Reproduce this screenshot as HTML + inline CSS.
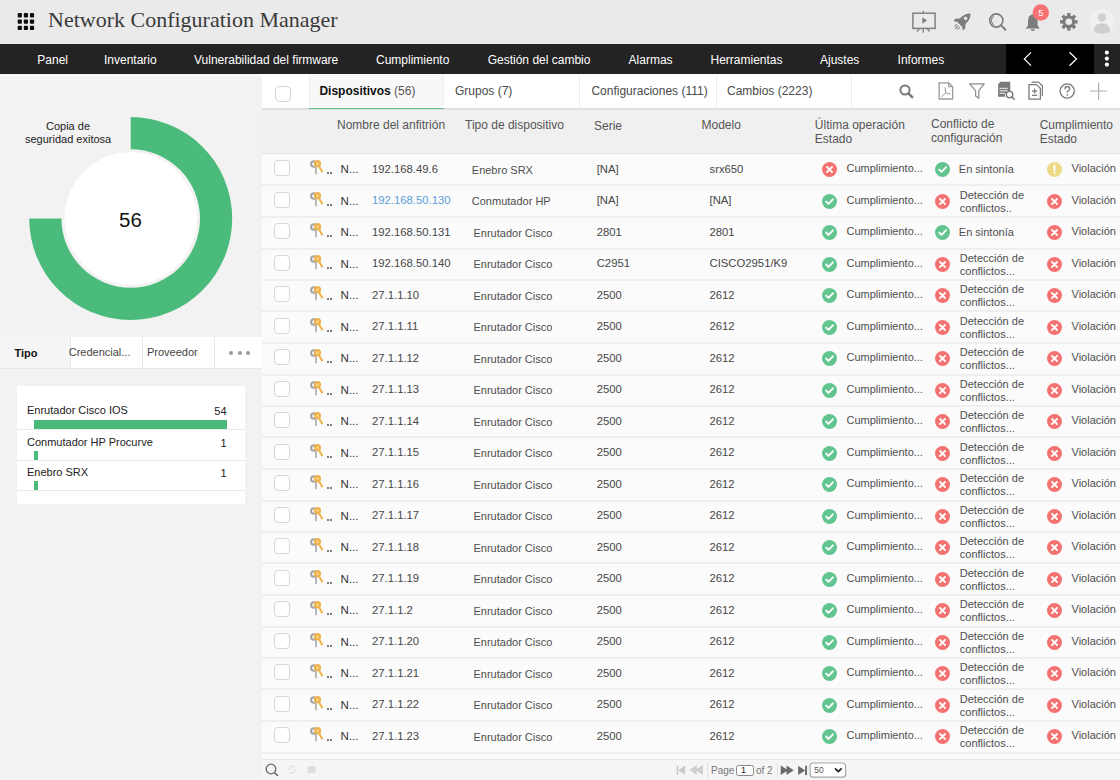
<!DOCTYPE html>
<html><head><meta charset="utf-8">
<style>
*{margin:0;padding:0;box-sizing:border-box}
html,body{width:1120px;height:780px;overflow:hidden;background:#f3f3f3;font-family:"Liberation Sans",sans-serif;color:#333}
.abs{position:absolute}
.t{position:absolute;white-space:nowrap;line-height:1}
#hdr{position:absolute;left:0;top:0;width:1120px;height:44px;background:#eaeaea}
#nav{position:absolute;left:0;top:44px;width:1120px;height:30px;background:#232323}
#nav .t{color:#fff;font-size:12px;top:10px}
#left{position:absolute;left:0;top:74px;width:262px;height:706px;background:#f2f2f2}
#main{position:absolute;left:262px;top:74px;width:858px;height:706px;background:#fbfbfb}
.cb{position:absolute;width:16px;height:16px;border:1.5px solid #d6d6d6;border-radius:4px;background:#fff}
.row{position:absolute;left:262px;width:858px;height:32px;border-top:1.5px solid #ebebeb}
.c{position:absolute;white-space:nowrap;font-size:11px;color:#4e4e4e;line-height:1}
.lato{font-size:11.3px;color:#474747}
</style></head><body>

<div id="hdr">
<svg class="abs" style="left:0;top:0" width="44" height="44" viewBox="0 0 44 44"><rect x="17.70" y="13.10" width="4.2" height="4.3" rx="0.9" fill="#0e0e0e"/><rect x="23.80" y="13.10" width="4.2" height="4.3" rx="0.9" fill="#0e0e0e"/><rect x="29.90" y="13.10" width="4.2" height="4.3" rx="0.9" fill="#0e0e0e"/><rect x="17.70" y="19.45" width="4.2" height="4.3" rx="0.9" fill="#0e0e0e"/><rect x="23.80" y="19.45" width="4.2" height="4.3" rx="0.9" fill="#0e0e0e"/><rect x="29.90" y="19.45" width="4.2" height="4.3" rx="0.9" fill="#0e0e0e"/><rect x="17.70" y="25.80" width="4.2" height="4.3" rx="0.9" fill="#0e0e0e"/><rect x="23.80" y="25.80" width="4.2" height="4.3" rx="0.9" fill="#0e0e0e"/><rect x="29.90" y="25.80" width="4.2" height="4.3" rx="0.9" fill="#0e0e0e"/></svg>
<div class="t" style="left:48px;top:9px;font-family:'Liberation Serif',serif;font-size:22px;color:#3a3a3a">Network Configuration Manager</div>
<svg class="abs" style="left:905px;top:0px" width="215" height="44" viewBox="905 0 215 44">
<rect x="912.9" y="13.2" width="22.2" height="15.2" fill="none" stroke="#808080" stroke-width="1.5"/>
<path d="M923.3 10.8 L923.3 13 M923.3 28.6 L923.3 32.8 M919.2 29 L917 31.5 M927.4 29 L929.6 31.5" stroke="#808080" stroke-width="1.3"/>
<path d="M922.3 17.2 L927 20.5 L922.3 23.8 Z" fill="#808080"/>
<g transform="translate(962.6,21.4) rotate(45)">
<path d="M0 -11 C4.2 -7.5 4.6 -1.5 3.4 4.2 L-3.4 4.2 C-4.6 -1.5 -4.2 -7.5 0 -11 Z" fill="#7c7c7c"/>
<path d="M-3.2 -1 L-6.8 3.2 L-6.8 6.2 L-3.4 4.2 Z M3.2 -1 L6.8 3.2 L6.8 6.2 L3.4 4.2 Z" fill="#7c7c7c"/>
<circle cx="0" cy="-4.3" r="1.7" fill="#eaeaea"/>
<path d="M-2 6 L-2 9.5 M0 6 L0 10.5 M2 6 L2 9.5" stroke="#8a8a8a" stroke-width="1.1"/>
</g>
<circle cx="996.3" cy="20.5" r="6.6" fill="none" stroke="#7c7c7c" stroke-width="1.6"/>
<path d="M994 16.2 A4.8 4.8 0 0 0 994 24.8" fill="none" stroke="#7c7c7c" stroke-width="1"/>
<path d="M1001.2 25.4 L1005.4 29.8" stroke="#7c7c7c" stroke-width="2" stroke-linecap="round"/>
<path d="M1032.8 14.2 Q1028 15 1028 21 L1028 25.5 L1025.7 28.6 L1039.9 28.6 L1037.6 25.5 L1037.6 21 Q1037.6 15 1032.8 14.2 Z" fill="#7c7c7c"/>
<path d="M1030.6 29.2 L1035 29.2 Q1035 31 1032.8 31 Q1030.6 31 1030.6 29.2 Z" fill="#7c7c7c"/>
<circle cx="1040.8" cy="12.5" r="8.2" fill="#f77272"/>
<text x="1040.8" y="15.7" font-size="9" fill="#fff" text-anchor="middle" font-family="Liberation Sans">5</text>
<g transform="translate(1068.8,21.8)">
<g fill="#7c7c7c"><rect x="-1.7" y="-8.8" width="3.4" height="17.6"/><rect x="-1.7" y="-8.8" width="3.4" height="17.6" transform="rotate(45)"/><rect x="-1.7" y="-8.8" width="3.4" height="17.6" transform="rotate(90)"/><rect x="-1.7" y="-8.8" width="3.4" height="17.6" transform="rotate(135)"/></g>
<circle r="6.4" fill="#7c7c7c"/>
<circle r="3.3" fill="#eaeaea"/>
</g>
<circle cx="1102.2" cy="21.6" r="12.3" fill="#f0f0f0"/>
<circle cx="1101.9" cy="17.4" r="4.1" fill="#cfcfcf"/>
<path d="M1093.8 31.2 Q1093.8 23.2 1102 23.2 Q1110.2 23.2 1110.2 31.2 Q1106.5 33.9 1102 33.9 Q1097.5 33.9 1093.8 31.2 Z" fill="#cfcfcf"/>
</svg>
</div>
<div id="nav">
<div class="t" style="left:37.3px">Panel</div>
<div class="t" style="left:104.0px">Inventario</div>
<div class="t" style="left:194.0px">Vulnerabilidad del firmware</div>
<div class="t" style="left:376.0px">Cumplimiento</div>
<div class="t" style="left:487.7px">Gestión del cambio</div>
<div class="t" style="left:628.6px">Alarmas</div>
<div class="t" style="left:710.5px">Herramientas</div>
<div class="t" style="left:820.0px">Ajustes</div>
<div class="t" style="left:897.6px">Informes</div>
<div class="abs" style="left:1006px;top:0;width:88px;height:30px;background:#000"></div>
<svg class="abs" style="left:1006px;top:0" width="114" height="30" viewBox="1006 44 114 30">
<path d="M1031 52.3 L1024.3 59 L1031 65.7" fill="none" stroke="#fff" stroke-width="1.2"/>
<path d="M1069.5 52.3 L1076.5 59 L1069.5 65.7" fill="none" stroke="#fff" stroke-width="1.2"/>
<circle cx="1106.9" cy="52.6" r="2.1" fill="#fff"/><circle cx="1106.9" cy="58.6" r="2.1" fill="#fff"/><circle cx="1106.9" cy="64.6" r="2.1" fill="#fff"/>
</svg>
</div>
<div id="left">
</div>
<div class="abs" style="left:0;top:74.5px;width:262px;height:1.5px;background:#fdfdfd"></div>
<svg class="abs" style="left:0;top:74px" width="262" height="262" viewBox="0 74 262 262">
<path d="M130.7 117 A101.5 101.5 0 1 1 29.2 218.5 L61.4 218.5 A69.3 69.3 0 1 0 130.7 149.2 Z" fill="#4bbb7c"/>
<circle cx="130.7" cy="218.5" r="66.3" fill="#fff"/>
</svg>
<div class="t" style="left:46px;top:121px;font-size:11px;color:#222">Copia de</div>
<div class="t" style="left:25px;top:134px;font-size:11px;color:#222">seguridad exitosa</div>
<div class="t" style="left:119px;top:210px;font-size:20.5px;color:#111">56</div>
<div class="abs" style="left:0;top:337px;width:262px;height:32px;background:#fff;border-bottom:1px solid #e6e6e6"></div>
<div class="abs" style="left:0;top:337px;width:70px;height:31px;background:#f5f5f5"></div>
<div class="abs" style="left:70px;top:337px;width:1px;height:31px;background:#e8e8e8"></div>
<div class="abs" style="left:142px;top:337px;width:1px;height:31px;background:#e8e8e8"></div>
<div class="abs" style="left:214px;top:337px;width:1px;height:31px;background:#e8e8e8"></div>
<div class="t" style="left:14.5px;top:348px;font-size:11px;font-weight:bold;color:#111">Tipo</div>
<div class="t" style="left:68.7px;top:347px;font-size:11px;color:#444">Credencial...</div>
<div class="t" style="left:147px;top:347px;font-size:11px;color:#444">Proveedor</div>
<div class="abs" style="left:229.0px;top:351px;width:4px;height:4px;border-radius:50%;background:#9a9a9a"></div>
<div class="abs" style="left:237.5px;top:351px;width:4px;height:4px;border-radius:50%;background:#9a9a9a"></div>
<div class="abs" style="left:246.0px;top:351px;width:4px;height:4px;border-radius:50%;background:#9a9a9a"></div>
<div class="abs" style="left:17px;top:386px;width:228px;height:118px;background:#fff"></div>
<div class="t" style="left:27px;top:405.0px;font-size:11px;color:#222">Enrutador Cisco IOS</div>
<div class="t" style="right:893.4px;top:406.0px;font-size:11px;color:#222">54</div>
<div class="abs" style="left:34.2px;top:420.0px;width:192.4px;height:9px;background:#4aba7b"></div>
<div class="t" style="left:27px;top:436.6px;font-size:11px;color:#222">Conmutador HP Procurve</div>
<div class="t" style="right:893.4px;top:437.6px;font-size:11px;color:#222">1</div>
<div class="abs" style="left:34.2px;top:451.0px;width:4.0px;height:9px;background:#4aba7b"></div>
<div class="t" style="left:27px;top:467.0px;font-size:11px;color:#222">Enebro SRX</div>
<div class="t" style="right:893.4px;top:468.0px;font-size:11px;color:#222">1</div>
<div class="abs" style="left:34.2px;top:481.4px;width:4.0px;height:9px;background:#4aba7b"></div>
<div class="abs" style="left:17px;top:429.3px;width:228px;height:1px;background:#e9e9e9"></div>
<div class="abs" style="left:17px;top:460.0px;width:228px;height:1px;background:#e9e9e9"></div>
<div class="abs" style="left:17px;top:490.3px;width:228px;height:1px;background:#e9e9e9"></div>
<div id="main"></div>
<div class="abs" style="left:262px;top:74px;width:858px;height:36px;background:#fff;border-bottom:2px solid #e0e0e0"></div>
<div class="abs" style="left:309px;top:75px;width:135px;height:31px;background:#f8f8f8;border-left:1px solid #ececec;border-right:1px solid #ececec"></div>
<div class="abs" style="left:309px;top:107.6px;width:135px;height:1.6px;background:#5cc18b"></div>
<div class="abs" style="left:579.4px;top:75px;width:1px;height:33px;background:#ececec"></div>
<div class="abs" style="left:715.7px;top:75px;width:1px;height:33px;background:#ececec"></div>
<div class="abs" style="left:851.0px;top:75px;width:1px;height:33px;background:#ececec"></div>
<div class="cb" style="left:275px;top:86px"></div>
<div class="t" style="left:319.4px;top:85px;font-size:12px;color:#111"><b>Dispositivos</b> <span style="color:#555">(56)</span></div>
<div class="t" style="left:455px;top:85px;font-size:12px;color:#4a4a4a">Grupos (7)</div>
<div class="t" style="left:591.4px;top:85px;font-size:12px;color:#4a4a4a">Configuraciones (111)</div>
<div class="t" style="left:727px;top:85px;font-size:12px;color:#4a4a4a">Cambios (2223)</div>
<svg class="abs" style="left:890px;top:75px" width="230" height="33" viewBox="890 75 230 33">
<circle cx="905" cy="90" r="4.6" fill="none" stroke="#7a7a7a" stroke-width="2"/>
<path d="M908.4 93.4 L912.2 97.2" stroke="#7a7a7a" stroke-width="2.6" stroke-linecap="round"/>
<path d="M939.1 82.8 L948.6 82.8 L952.6 86.8 L952.6 99 L939.1 99 Z" fill="none" stroke="#999" stroke-width="1.3" stroke-linejoin="round"/>
<path d="M948.6 82.8 L948.6 86.8 L952.6 86.8" fill="none" stroke="#999" stroke-width="1.1"/>
<path d="M945 87.2 L945.7 92.9 L941.2 96.9 M945.7 92.9 L950.5 94" fill="none" stroke="#999" stroke-width="1"/>
<path d="M969.5 83.9 L984.2 83.9 L978.8 90.6 L978.8 98.3 L975.6 96 L975.6 90.6 Z" fill="none" stroke="#8a8a8a" stroke-width="1.2" stroke-linejoin="round"/>
<path d="M1000.5 81.8 L1010.3 81.8 L1010.3 91 A4.5 4.5 0 0 0 1005.3 96.8 L998.1 96.8 L998.1 84.3 Z" fill="#7a7a7a"/>
<path d="M999.5 88.3 L1007.8 88.3 M999.5 90.8 L1007.8 90.8 M999.5 93.3 L1004.8 93.3" stroke="#f4f4f4" stroke-width="1"/>
<circle cx="1009.6" cy="94.6" r="3.2" fill="none" stroke="#7a7a7a" stroke-width="1.4"/>
<path d="M1011.9 96.9 L1014.2 99.2" stroke="#7a7a7a" stroke-width="1.6" stroke-linecap="round"/>
<path d="M1031.5 82.2 L1038.6 82.2 L1042.4 86 L1042.4 95.8" fill="none" stroke="#7a7a7a" stroke-width="1.2"/>
<path d="M1029 84.6 L1036.6 84.6 L1040.4 88.4 L1040.4 99.2 L1029 99.2 Z" fill="#fff" stroke="#7a7a7a" stroke-width="1.3" stroke-linejoin="round"/>
<path d="M1034.6 88.6 L1034.6 93.6 M1032 91.1 L1037.2 91.1 M1032 95.3 L1037.2 95.3" stroke="#7a7a7a" stroke-width="1.2"/>
<circle cx="1067.2" cy="91" r="7.1" fill="none" stroke="#7a7a7a" stroke-width="1.3"/>
<path d="M1064.9 89.2 Q1064.9 86.5 1067.3 86.5 Q1069.7 86.5 1069.7 88.8 Q1069.7 90.2 1068.2 90.9 Q1067.3 91.4 1067.3 92.7" fill="none" stroke="#7a7a7a" stroke-width="1.3"/>
<circle cx="1067.3" cy="94.8" r="0.85" fill="#7a7a7a"/>
<path d="M1098.6 82.4 L1098.6 99.7 M1090 91 L1107.2 91" stroke="#b0b0b0" stroke-width="1.2"/>
</svg>
<div class="abs" style="left:262px;top:110px;width:858px;height:44px;background:#f0f0f0;border-bottom:1px solid #e6e6e6"></div>
<div class="t" style="left:337.0px;top:118.0px;font-size:12px;color:#555;line-height:14px">Nombre del anfitrión</div>
<div class="t" style="left:465.0px;top:118.0px;font-size:12px;color:#555;line-height:14px">Tipo de dispositivo</div>
<div class="t" style="left:594.0px;top:118.5px;font-size:12px;color:#555;line-height:14px">Serie</div>
<div class="t" style="left:701.5px;top:118.0px;font-size:12px;color:#555;line-height:14px">Modelo</div>
<div class="t" style="left:814.8px;top:117.5px;font-size:12px;color:#555;line-height:14px">Última operación<br>Estado</div>
<div class="t" style="left:931.0px;top:116.5px;font-size:12px;color:#555;line-height:14px">Conflicto de<br>configuración</div>
<div class="t" style="left:1039.7px;top:117.5px;font-size:12px;color:#555;line-height:14px">Cumplimiento<br>Estado</div>

<div class="cb" style="left:274px;top:160.0px"></div>
<div class="abs" style="left:306px;top:158.0px;width:20px;height:20px"><svg width="20" height="20" viewBox="306 158 20 20"><circle cx="313.9" cy="164" r="2.8" fill="none" stroke="#a4a4a4" stroke-width="2.1"/><path d="M316 166.5 L316 174.3" stroke="#adadad" stroke-width="1.7"/><circle cx="317.5" cy="163.7" r="2.5" fill="#f6d685" stroke="#efb24c" stroke-width="2.2"/><path d="M318.9 166.2 L322.6 172.3" stroke="#efb24c" stroke-width="2.1"/></svg></div>
<div class="abs" style="left:326.8px;top:172.3px;width:1.9px;height:1.9px;background:#555;border-radius:50%"></div>
<div class="abs" style="left:329.8px;top:172.3px;width:1.9px;height:1.9px;background:#555;border-radius:50%"></div>
<div class="c" style="left:340.6px;top:164.0px;color:#333;font-size:11.5px">N...</div>
<div class="c lato" style="left:372px;top:163.8px;">192.168.49.6</div>
<div class="c" style="left:471.8px;top:164.7px">Enebro SRX</div>
<div class="c lato" style="left:596.7px;top:163.8px">[NA]</div>
<div class="c lato" style="left:709.5px;top:163.8px">srx650</div>
<div class="abs" style="left:822.4px;top:162.2px;width:15px;height:15px"><svg width="15" height="15" viewBox="0 0 15 15"><circle cx="7.5" cy="7.5" r="7.5" fill="#f57272"/><path d="M5 5 L10 10 M10 5 L5 10" stroke="#fff" stroke-width="1.8" fill="none" stroke-linecap="round"/></svg></div>
<div class="c" style="left:846.5px;top:163.0px">Cumplimiento...</div>
<div class="abs" style="left:934.8px;top:162.0px;width:15px;height:15px"><svg width="15" height="15" viewBox="0 0 15 15"><circle cx="7.5" cy="7.5" r="7.5" fill="#62c48f"/><path d="M4.2 7.6 L6.5 9.8 L10.9 5.3" stroke="#fff" stroke-width="1.9" fill="none" stroke-linecap="round" stroke-linejoin="round"/></svg></div>
<div class="c" style="left:958.8px;top:164.0px">En sintonía</div>
<div class="abs" style="left:1046.5px;top:162.2px;width:15px;height:15px"><svg width="15" height="15" viewBox="0 0 15 15"><circle cx="7.5" cy="7.5" r="7.5" fill="#ecdb84"/><path d="M7.5 3.8 L7.5 8.6" stroke="#fff" stroke-width="1.9" stroke-linecap="round"/><circle cx="7.5" cy="11" r="1" fill="#fff"/></svg></div>
<div class="c" style="left:1071.5px;top:163.0px">Violación</div>
<div class="abs" style="left:262px;top:184px;width:858px;height:2px;background:#efefef"></div>
<div class="cb" style="left:274px;top:191.5px"></div>
<div class="abs" style="left:306px;top:189.5px;width:20px;height:20px"><svg width="20" height="20" viewBox="306 158 20 20"><circle cx="313.9" cy="164" r="2.8" fill="none" stroke="#a4a4a4" stroke-width="2.1"/><path d="M316 166.5 L316 174.3" stroke="#adadad" stroke-width="1.7"/><circle cx="317.5" cy="163.7" r="2.5" fill="#f6d685" stroke="#efb24c" stroke-width="2.2"/><path d="M318.9 166.2 L322.6 172.3" stroke="#efb24c" stroke-width="2.1"/></svg></div>
<div class="abs" style="left:326.8px;top:203.8px;width:1.9px;height:1.9px;background:#555;border-radius:50%"></div>
<div class="abs" style="left:329.8px;top:203.8px;width:1.9px;height:1.9px;background:#555;border-radius:50%"></div>
<div class="c" style="left:340.6px;top:195.5px;color:#333;font-size:11.5px">N...</div>
<div class="c lato" style="left:372px;top:195.3px;color:#5aa0da">192.168.50.130</div>
<div class="c" style="left:471.8px;top:196.2px">Conmutador HP</div>
<div class="c lato" style="left:596.7px;top:195.3px">[NA]</div>
<div class="c lato" style="left:709.5px;top:195.3px">[NA]</div>
<div class="abs" style="left:822.4px;top:193.7px;width:15px;height:15px"><svg width="15" height="15" viewBox="0 0 15 15"><circle cx="7.5" cy="7.5" r="7.5" fill="#62c48f"/><path d="M4.2 7.6 L6.5 9.8 L10.9 5.3" stroke="#fff" stroke-width="1.9" fill="none" stroke-linecap="round" stroke-linejoin="round"/></svg></div>
<div class="c" style="left:846.5px;top:194.5px">Cumplimiento...</div>
<div class="abs" style="left:934.8px;top:193.5px;width:15px;height:15px"><svg width="15" height="15" viewBox="0 0 15 15"><circle cx="7.5" cy="7.5" r="7.5" fill="#f57272"/><path d="M5 5 L10 10 M10 5 L5 10" stroke="#fff" stroke-width="1.8" fill="none" stroke-linecap="round"/></svg></div>
<div class="c" style="left:959.8px;top:188.8px;line-height:12.75px">Detección de<br>conflictos..</div>
<div class="abs" style="left:1046.5px;top:193.7px;width:15px;height:15px"><svg width="15" height="15" viewBox="0 0 15 15"><circle cx="7.5" cy="7.5" r="7.5" fill="#f57272"/><path d="M5 5 L10 10 M10 5 L5 10" stroke="#fff" stroke-width="1.8" fill="none" stroke-linecap="round"/></svg></div>
<div class="c" style="left:1071.5px;top:194.5px">Violación</div>
<div class="abs" style="left:262px;top:216px;width:858px;height:2px;background:#efefef"></div>
<div class="cb" style="left:274px;top:223.0px"></div>
<div class="abs" style="left:306px;top:221.0px;width:20px;height:20px"><svg width="20" height="20" viewBox="306 158 20 20"><circle cx="313.9" cy="164" r="2.8" fill="none" stroke="#a4a4a4" stroke-width="2.1"/><path d="M316 166.5 L316 174.3" stroke="#adadad" stroke-width="1.7"/><circle cx="317.5" cy="163.7" r="2.5" fill="#f6d685" stroke="#efb24c" stroke-width="2.2"/><path d="M318.9 166.2 L322.6 172.3" stroke="#efb24c" stroke-width="2.1"/></svg></div>
<div class="abs" style="left:326.8px;top:235.3px;width:1.9px;height:1.9px;background:#555;border-radius:50%"></div>
<div class="abs" style="left:329.8px;top:235.3px;width:1.9px;height:1.9px;background:#555;border-radius:50%"></div>
<div class="c" style="left:340.6px;top:227.0px;color:#333;font-size:11.5px">N...</div>
<div class="c lato" style="left:372px;top:226.8px;">192.168.50.131</div>
<div class="c" style="left:473.5px;top:227.7px">Enrutador Cisco</div>
<div class="c lato" style="left:596.7px;top:226.8px">2801</div>
<div class="c lato" style="left:709.5px;top:226.8px">2801</div>
<div class="abs" style="left:822.4px;top:225.2px;width:15px;height:15px"><svg width="15" height="15" viewBox="0 0 15 15"><circle cx="7.5" cy="7.5" r="7.5" fill="#62c48f"/><path d="M4.2 7.6 L6.5 9.8 L10.9 5.3" stroke="#fff" stroke-width="1.9" fill="none" stroke-linecap="round" stroke-linejoin="round"/></svg></div>
<div class="c" style="left:846.5px;top:226.0px">Cumplimiento...</div>
<div class="abs" style="left:934.8px;top:225.0px;width:15px;height:15px"><svg width="15" height="15" viewBox="0 0 15 15"><circle cx="7.5" cy="7.5" r="7.5" fill="#62c48f"/><path d="M4.2 7.6 L6.5 9.8 L10.9 5.3" stroke="#fff" stroke-width="1.9" fill="none" stroke-linecap="round" stroke-linejoin="round"/></svg></div>
<div class="c" style="left:958.8px;top:227.0px">En sintonía</div>
<div class="abs" style="left:1046.5px;top:225.2px;width:15px;height:15px"><svg width="15" height="15" viewBox="0 0 15 15"><circle cx="7.5" cy="7.5" r="7.5" fill="#f57272"/><path d="M5 5 L10 10 M10 5 L5 10" stroke="#fff" stroke-width="1.8" fill="none" stroke-linecap="round"/></svg></div>
<div class="c" style="left:1071.5px;top:226.0px">Violación</div>
<div class="abs" style="left:262px;top:248px;width:858px;height:2px;background:#efefef"></div>
<div class="cb" style="left:274px;top:254.5px"></div>
<div class="abs" style="left:306px;top:252.5px;width:20px;height:20px"><svg width="20" height="20" viewBox="306 158 20 20"><circle cx="313.9" cy="164" r="2.8" fill="none" stroke="#a4a4a4" stroke-width="2.1"/><path d="M316 166.5 L316 174.3" stroke="#adadad" stroke-width="1.7"/><circle cx="317.5" cy="163.7" r="2.5" fill="#f6d685" stroke="#efb24c" stroke-width="2.2"/><path d="M318.9 166.2 L322.6 172.3" stroke="#efb24c" stroke-width="2.1"/></svg></div>
<div class="abs" style="left:326.8px;top:266.8px;width:1.9px;height:1.9px;background:#555;border-radius:50%"></div>
<div class="abs" style="left:329.8px;top:266.8px;width:1.9px;height:1.9px;background:#555;border-radius:50%"></div>
<div class="c" style="left:340.6px;top:258.5px;color:#333;font-size:11.5px">N...</div>
<div class="c lato" style="left:372px;top:258.3px;">192.168.50.140</div>
<div class="c" style="left:473.5px;top:259.2px">Enrutador Cisco</div>
<div class="c lato" style="left:596.7px;top:258.3px">C2951</div>
<div class="c lato" style="left:709.5px;top:258.3px">CISCO2951/K9</div>
<div class="abs" style="left:822.4px;top:256.7px;width:15px;height:15px"><svg width="15" height="15" viewBox="0 0 15 15"><circle cx="7.5" cy="7.5" r="7.5" fill="#62c48f"/><path d="M4.2 7.6 L6.5 9.8 L10.9 5.3" stroke="#fff" stroke-width="1.9" fill="none" stroke-linecap="round" stroke-linejoin="round"/></svg></div>
<div class="c" style="left:846.5px;top:257.5px">Cumplimiento...</div>
<div class="abs" style="left:934.8px;top:256.5px;width:15px;height:15px"><svg width="15" height="15" viewBox="0 0 15 15"><circle cx="7.5" cy="7.5" r="7.5" fill="#f57272"/><path d="M5 5 L10 10 M10 5 L5 10" stroke="#fff" stroke-width="1.8" fill="none" stroke-linecap="round"/></svg></div>
<div class="c" style="left:959.8px;top:251.8px;line-height:12.75px">Detección de<br>conflictos...</div>
<div class="abs" style="left:1046.5px;top:256.7px;width:15px;height:15px"><svg width="15" height="15" viewBox="0 0 15 15"><circle cx="7.5" cy="7.5" r="7.5" fill="#f57272"/><path d="M5 5 L10 10 M10 5 L5 10" stroke="#fff" stroke-width="1.8" fill="none" stroke-linecap="round"/></svg></div>
<div class="c" style="left:1071.5px;top:257.5px">Violación</div>
<div class="abs" style="left:262px;top:279px;width:858px;height:2px;background:#efefef"></div>
<div class="cb" style="left:274px;top:286.0px"></div>
<div class="abs" style="left:306px;top:284.0px;width:20px;height:20px"><svg width="20" height="20" viewBox="306 158 20 20"><circle cx="313.9" cy="164" r="2.8" fill="none" stroke="#a4a4a4" stroke-width="2.1"/><path d="M316 166.5 L316 174.3" stroke="#adadad" stroke-width="1.7"/><circle cx="317.5" cy="163.7" r="2.5" fill="#f6d685" stroke="#efb24c" stroke-width="2.2"/><path d="M318.9 166.2 L322.6 172.3" stroke="#efb24c" stroke-width="2.1"/></svg></div>
<div class="abs" style="left:326.8px;top:298.3px;width:1.9px;height:1.9px;background:#555;border-radius:50%"></div>
<div class="abs" style="left:329.8px;top:298.3px;width:1.9px;height:1.9px;background:#555;border-radius:50%"></div>
<div class="c" style="left:340.6px;top:290.0px;color:#333;font-size:11.5px">N...</div>
<div class="c lato" style="left:372px;top:289.8px;">27.1.1.10</div>
<div class="c" style="left:473.5px;top:290.7px">Enrutador Cisco</div>
<div class="c lato" style="left:596.7px;top:289.8px">2500</div>
<div class="c lato" style="left:709.5px;top:289.8px">2612</div>
<div class="abs" style="left:822.4px;top:288.2px;width:15px;height:15px"><svg width="15" height="15" viewBox="0 0 15 15"><circle cx="7.5" cy="7.5" r="7.5" fill="#62c48f"/><path d="M4.2 7.6 L6.5 9.8 L10.9 5.3" stroke="#fff" stroke-width="1.9" fill="none" stroke-linecap="round" stroke-linejoin="round"/></svg></div>
<div class="c" style="left:846.5px;top:289.0px">Cumplimiento...</div>
<div class="abs" style="left:934.8px;top:288.0px;width:15px;height:15px"><svg width="15" height="15" viewBox="0 0 15 15"><circle cx="7.5" cy="7.5" r="7.5" fill="#f57272"/><path d="M5 5 L10 10 M10 5 L5 10" stroke="#fff" stroke-width="1.8" fill="none" stroke-linecap="round"/></svg></div>
<div class="c" style="left:959.8px;top:283.2px;line-height:12.75px">Detección de<br>conflictos...</div>
<div class="abs" style="left:1046.5px;top:288.2px;width:15px;height:15px"><svg width="15" height="15" viewBox="0 0 15 15"><circle cx="7.5" cy="7.5" r="7.5" fill="#f57272"/><path d="M5 5 L10 10 M10 5 L5 10" stroke="#fff" stroke-width="1.8" fill="none" stroke-linecap="round"/></svg></div>
<div class="c" style="left:1071.5px;top:289.0px">Violación</div>
<div class="abs" style="left:262px;top:310px;width:858px;height:2px;background:#efefef"></div>
<div class="cb" style="left:274px;top:317.5px"></div>
<div class="abs" style="left:306px;top:315.5px;width:20px;height:20px"><svg width="20" height="20" viewBox="306 158 20 20"><circle cx="313.9" cy="164" r="2.8" fill="none" stroke="#a4a4a4" stroke-width="2.1"/><path d="M316 166.5 L316 174.3" stroke="#adadad" stroke-width="1.7"/><circle cx="317.5" cy="163.7" r="2.5" fill="#f6d685" stroke="#efb24c" stroke-width="2.2"/><path d="M318.9 166.2 L322.6 172.3" stroke="#efb24c" stroke-width="2.1"/></svg></div>
<div class="abs" style="left:326.8px;top:329.8px;width:1.9px;height:1.9px;background:#555;border-radius:50%"></div>
<div class="abs" style="left:329.8px;top:329.8px;width:1.9px;height:1.9px;background:#555;border-radius:50%"></div>
<div class="c" style="left:340.6px;top:321.5px;color:#333;font-size:11.5px">N...</div>
<div class="c lato" style="left:372px;top:321.3px;">27.1.1.11</div>
<div class="c" style="left:473.5px;top:322.2px">Enrutador Cisco</div>
<div class="c lato" style="left:596.7px;top:321.3px">2500</div>
<div class="c lato" style="left:709.5px;top:321.3px">2612</div>
<div class="abs" style="left:822.4px;top:319.7px;width:15px;height:15px"><svg width="15" height="15" viewBox="0 0 15 15"><circle cx="7.5" cy="7.5" r="7.5" fill="#62c48f"/><path d="M4.2 7.6 L6.5 9.8 L10.9 5.3" stroke="#fff" stroke-width="1.9" fill="none" stroke-linecap="round" stroke-linejoin="round"/></svg></div>
<div class="c" style="left:846.5px;top:320.5px">Cumplimiento...</div>
<div class="abs" style="left:934.8px;top:319.5px;width:15px;height:15px"><svg width="15" height="15" viewBox="0 0 15 15"><circle cx="7.5" cy="7.5" r="7.5" fill="#f57272"/><path d="M5 5 L10 10 M10 5 L5 10" stroke="#fff" stroke-width="1.8" fill="none" stroke-linecap="round"/></svg></div>
<div class="c" style="left:959.8px;top:314.8px;line-height:12.75px">Detección de<br>conflictos...</div>
<div class="abs" style="left:1046.5px;top:319.7px;width:15px;height:15px"><svg width="15" height="15" viewBox="0 0 15 15"><circle cx="7.5" cy="7.5" r="7.5" fill="#f57272"/><path d="M5 5 L10 10 M10 5 L5 10" stroke="#fff" stroke-width="1.8" fill="none" stroke-linecap="round"/></svg></div>
<div class="c" style="left:1071.5px;top:320.5px">Violación</div>
<div class="abs" style="left:262px;top:342px;width:858px;height:2px;background:#efefef"></div>
<div class="cb" style="left:274px;top:349.0px"></div>
<div class="abs" style="left:306px;top:347.0px;width:20px;height:20px"><svg width="20" height="20" viewBox="306 158 20 20"><circle cx="313.9" cy="164" r="2.8" fill="none" stroke="#a4a4a4" stroke-width="2.1"/><path d="M316 166.5 L316 174.3" stroke="#adadad" stroke-width="1.7"/><circle cx="317.5" cy="163.7" r="2.5" fill="#f6d685" stroke="#efb24c" stroke-width="2.2"/><path d="M318.9 166.2 L322.6 172.3" stroke="#efb24c" stroke-width="2.1"/></svg></div>
<div class="abs" style="left:326.8px;top:361.3px;width:1.9px;height:1.9px;background:#555;border-radius:50%"></div>
<div class="abs" style="left:329.8px;top:361.3px;width:1.9px;height:1.9px;background:#555;border-radius:50%"></div>
<div class="c" style="left:340.6px;top:353.0px;color:#333;font-size:11.5px">N...</div>
<div class="c lato" style="left:372px;top:352.8px;">27.1.1.12</div>
<div class="c" style="left:473.5px;top:353.7px">Enrutador Cisco</div>
<div class="c lato" style="left:596.7px;top:352.8px">2500</div>
<div class="c lato" style="left:709.5px;top:352.8px">2612</div>
<div class="abs" style="left:822.4px;top:351.2px;width:15px;height:15px"><svg width="15" height="15" viewBox="0 0 15 15"><circle cx="7.5" cy="7.5" r="7.5" fill="#62c48f"/><path d="M4.2 7.6 L6.5 9.8 L10.9 5.3" stroke="#fff" stroke-width="1.9" fill="none" stroke-linecap="round" stroke-linejoin="round"/></svg></div>
<div class="c" style="left:846.5px;top:352.0px">Cumplimiento...</div>
<div class="abs" style="left:934.8px;top:351.0px;width:15px;height:15px"><svg width="15" height="15" viewBox="0 0 15 15"><circle cx="7.5" cy="7.5" r="7.5" fill="#f57272"/><path d="M5 5 L10 10 M10 5 L5 10" stroke="#fff" stroke-width="1.8" fill="none" stroke-linecap="round"/></svg></div>
<div class="c" style="left:959.8px;top:346.2px;line-height:12.75px">Detección de<br>conflictos...</div>
<div class="abs" style="left:1046.5px;top:351.2px;width:15px;height:15px"><svg width="15" height="15" viewBox="0 0 15 15"><circle cx="7.5" cy="7.5" r="7.5" fill="#f57272"/><path d="M5 5 L10 10 M10 5 L5 10" stroke="#fff" stroke-width="1.8" fill="none" stroke-linecap="round"/></svg></div>
<div class="c" style="left:1071.5px;top:352.0px">Violación</div>
<div class="abs" style="left:262px;top:374px;width:858px;height:2px;background:#efefef"></div>
<div class="cb" style="left:274px;top:380.5px"></div>
<div class="abs" style="left:306px;top:378.5px;width:20px;height:20px"><svg width="20" height="20" viewBox="306 158 20 20"><circle cx="313.9" cy="164" r="2.8" fill="none" stroke="#a4a4a4" stroke-width="2.1"/><path d="M316 166.5 L316 174.3" stroke="#adadad" stroke-width="1.7"/><circle cx="317.5" cy="163.7" r="2.5" fill="#f6d685" stroke="#efb24c" stroke-width="2.2"/><path d="M318.9 166.2 L322.6 172.3" stroke="#efb24c" stroke-width="2.1"/></svg></div>
<div class="abs" style="left:326.8px;top:392.8px;width:1.9px;height:1.9px;background:#555;border-radius:50%"></div>
<div class="abs" style="left:329.8px;top:392.8px;width:1.9px;height:1.9px;background:#555;border-radius:50%"></div>
<div class="c" style="left:340.6px;top:384.5px;color:#333;font-size:11.5px">N...</div>
<div class="c lato" style="left:372px;top:384.3px;">27.1.1.13</div>
<div class="c" style="left:473.5px;top:385.2px">Enrutador Cisco</div>
<div class="c lato" style="left:596.7px;top:384.3px">2500</div>
<div class="c lato" style="left:709.5px;top:384.3px">2612</div>
<div class="abs" style="left:822.4px;top:382.7px;width:15px;height:15px"><svg width="15" height="15" viewBox="0 0 15 15"><circle cx="7.5" cy="7.5" r="7.5" fill="#62c48f"/><path d="M4.2 7.6 L6.5 9.8 L10.9 5.3" stroke="#fff" stroke-width="1.9" fill="none" stroke-linecap="round" stroke-linejoin="round"/></svg></div>
<div class="c" style="left:846.5px;top:383.5px">Cumplimiento...</div>
<div class="abs" style="left:934.8px;top:382.5px;width:15px;height:15px"><svg width="15" height="15" viewBox="0 0 15 15"><circle cx="7.5" cy="7.5" r="7.5" fill="#f57272"/><path d="M5 5 L10 10 M10 5 L5 10" stroke="#fff" stroke-width="1.8" fill="none" stroke-linecap="round"/></svg></div>
<div class="c" style="left:959.8px;top:377.8px;line-height:12.75px">Detección de<br>conflictos...</div>
<div class="abs" style="left:1046.5px;top:382.7px;width:15px;height:15px"><svg width="15" height="15" viewBox="0 0 15 15"><circle cx="7.5" cy="7.5" r="7.5" fill="#f57272"/><path d="M5 5 L10 10 M10 5 L5 10" stroke="#fff" stroke-width="1.8" fill="none" stroke-linecap="round"/></svg></div>
<div class="c" style="left:1071.5px;top:383.5px">Violación</div>
<div class="abs" style="left:262px;top:405px;width:858px;height:2px;background:#efefef"></div>
<div class="cb" style="left:274px;top:412.0px"></div>
<div class="abs" style="left:306px;top:410.0px;width:20px;height:20px"><svg width="20" height="20" viewBox="306 158 20 20"><circle cx="313.9" cy="164" r="2.8" fill="none" stroke="#a4a4a4" stroke-width="2.1"/><path d="M316 166.5 L316 174.3" stroke="#adadad" stroke-width="1.7"/><circle cx="317.5" cy="163.7" r="2.5" fill="#f6d685" stroke="#efb24c" stroke-width="2.2"/><path d="M318.9 166.2 L322.6 172.3" stroke="#efb24c" stroke-width="2.1"/></svg></div>
<div class="abs" style="left:326.8px;top:424.3px;width:1.9px;height:1.9px;background:#555;border-radius:50%"></div>
<div class="abs" style="left:329.8px;top:424.3px;width:1.9px;height:1.9px;background:#555;border-radius:50%"></div>
<div class="c" style="left:340.6px;top:416.0px;color:#333;font-size:11.5px">N...</div>
<div class="c lato" style="left:372px;top:415.8px;">27.1.1.14</div>
<div class="c" style="left:473.5px;top:416.7px">Enrutador Cisco</div>
<div class="c lato" style="left:596.7px;top:415.8px">2500</div>
<div class="c lato" style="left:709.5px;top:415.8px">2612</div>
<div class="abs" style="left:822.4px;top:414.2px;width:15px;height:15px"><svg width="15" height="15" viewBox="0 0 15 15"><circle cx="7.5" cy="7.5" r="7.5" fill="#62c48f"/><path d="M4.2 7.6 L6.5 9.8 L10.9 5.3" stroke="#fff" stroke-width="1.9" fill="none" stroke-linecap="round" stroke-linejoin="round"/></svg></div>
<div class="c" style="left:846.5px;top:415.0px">Cumplimiento...</div>
<div class="abs" style="left:934.8px;top:414.0px;width:15px;height:15px"><svg width="15" height="15" viewBox="0 0 15 15"><circle cx="7.5" cy="7.5" r="7.5" fill="#f57272"/><path d="M5 5 L10 10 M10 5 L5 10" stroke="#fff" stroke-width="1.8" fill="none" stroke-linecap="round"/></svg></div>
<div class="c" style="left:959.8px;top:409.2px;line-height:12.75px">Detección de<br>conflictos...</div>
<div class="abs" style="left:1046.5px;top:414.2px;width:15px;height:15px"><svg width="15" height="15" viewBox="0 0 15 15"><circle cx="7.5" cy="7.5" r="7.5" fill="#f57272"/><path d="M5 5 L10 10 M10 5 L5 10" stroke="#fff" stroke-width="1.8" fill="none" stroke-linecap="round"/></svg></div>
<div class="c" style="left:1071.5px;top:415.0px">Violación</div>
<div class="abs" style="left:262px;top:436px;width:858px;height:2px;background:#efefef"></div>
<div class="cb" style="left:274px;top:443.5px"></div>
<div class="abs" style="left:306px;top:441.5px;width:20px;height:20px"><svg width="20" height="20" viewBox="306 158 20 20"><circle cx="313.9" cy="164" r="2.8" fill="none" stroke="#a4a4a4" stroke-width="2.1"/><path d="M316 166.5 L316 174.3" stroke="#adadad" stroke-width="1.7"/><circle cx="317.5" cy="163.7" r="2.5" fill="#f6d685" stroke="#efb24c" stroke-width="2.2"/><path d="M318.9 166.2 L322.6 172.3" stroke="#efb24c" stroke-width="2.1"/></svg></div>
<div class="abs" style="left:326.8px;top:455.8px;width:1.9px;height:1.9px;background:#555;border-radius:50%"></div>
<div class="abs" style="left:329.8px;top:455.8px;width:1.9px;height:1.9px;background:#555;border-radius:50%"></div>
<div class="c" style="left:340.6px;top:447.5px;color:#333;font-size:11.5px">N...</div>
<div class="c lato" style="left:372px;top:447.3px;">27.1.1.15</div>
<div class="c" style="left:473.5px;top:448.2px">Enrutador Cisco</div>
<div class="c lato" style="left:596.7px;top:447.3px">2500</div>
<div class="c lato" style="left:709.5px;top:447.3px">2612</div>
<div class="abs" style="left:822.4px;top:445.7px;width:15px;height:15px"><svg width="15" height="15" viewBox="0 0 15 15"><circle cx="7.5" cy="7.5" r="7.5" fill="#62c48f"/><path d="M4.2 7.6 L6.5 9.8 L10.9 5.3" stroke="#fff" stroke-width="1.9" fill="none" stroke-linecap="round" stroke-linejoin="round"/></svg></div>
<div class="c" style="left:846.5px;top:446.5px">Cumplimiento...</div>
<div class="abs" style="left:934.8px;top:445.5px;width:15px;height:15px"><svg width="15" height="15" viewBox="0 0 15 15"><circle cx="7.5" cy="7.5" r="7.5" fill="#f57272"/><path d="M5 5 L10 10 M10 5 L5 10" stroke="#fff" stroke-width="1.8" fill="none" stroke-linecap="round"/></svg></div>
<div class="c" style="left:959.8px;top:440.8px;line-height:12.75px">Detección de<br>conflictos...</div>
<div class="abs" style="left:1046.5px;top:445.7px;width:15px;height:15px"><svg width="15" height="15" viewBox="0 0 15 15"><circle cx="7.5" cy="7.5" r="7.5" fill="#f57272"/><path d="M5 5 L10 10 M10 5 L5 10" stroke="#fff" stroke-width="1.8" fill="none" stroke-linecap="round"/></svg></div>
<div class="c" style="left:1071.5px;top:446.5px">Violación</div>
<div class="abs" style="left:262px;top:468px;width:858px;height:2px;background:#efefef"></div>
<div class="cb" style="left:274px;top:475.0px"></div>
<div class="abs" style="left:306px;top:473.0px;width:20px;height:20px"><svg width="20" height="20" viewBox="306 158 20 20"><circle cx="313.9" cy="164" r="2.8" fill="none" stroke="#a4a4a4" stroke-width="2.1"/><path d="M316 166.5 L316 174.3" stroke="#adadad" stroke-width="1.7"/><circle cx="317.5" cy="163.7" r="2.5" fill="#f6d685" stroke="#efb24c" stroke-width="2.2"/><path d="M318.9 166.2 L322.6 172.3" stroke="#efb24c" stroke-width="2.1"/></svg></div>
<div class="abs" style="left:326.8px;top:487.3px;width:1.9px;height:1.9px;background:#555;border-radius:50%"></div>
<div class="abs" style="left:329.8px;top:487.3px;width:1.9px;height:1.9px;background:#555;border-radius:50%"></div>
<div class="c" style="left:340.6px;top:479.0px;color:#333;font-size:11.5px">N...</div>
<div class="c lato" style="left:372px;top:478.8px;">27.1.1.16</div>
<div class="c" style="left:473.5px;top:479.7px">Enrutador Cisco</div>
<div class="c lato" style="left:596.7px;top:478.8px">2500</div>
<div class="c lato" style="left:709.5px;top:478.8px">2612</div>
<div class="abs" style="left:822.4px;top:477.2px;width:15px;height:15px"><svg width="15" height="15" viewBox="0 0 15 15"><circle cx="7.5" cy="7.5" r="7.5" fill="#62c48f"/><path d="M4.2 7.6 L6.5 9.8 L10.9 5.3" stroke="#fff" stroke-width="1.9" fill="none" stroke-linecap="round" stroke-linejoin="round"/></svg></div>
<div class="c" style="left:846.5px;top:478.0px">Cumplimiento...</div>
<div class="abs" style="left:934.8px;top:477.0px;width:15px;height:15px"><svg width="15" height="15" viewBox="0 0 15 15"><circle cx="7.5" cy="7.5" r="7.5" fill="#f57272"/><path d="M5 5 L10 10 M10 5 L5 10" stroke="#fff" stroke-width="1.8" fill="none" stroke-linecap="round"/></svg></div>
<div class="c" style="left:959.8px;top:472.2px;line-height:12.75px">Detección de<br>conflictos...</div>
<div class="abs" style="left:1046.5px;top:477.2px;width:15px;height:15px"><svg width="15" height="15" viewBox="0 0 15 15"><circle cx="7.5" cy="7.5" r="7.5" fill="#f57272"/><path d="M5 5 L10 10 M10 5 L5 10" stroke="#fff" stroke-width="1.8" fill="none" stroke-linecap="round"/></svg></div>
<div class="c" style="left:1071.5px;top:478.0px">Violación</div>
<div class="abs" style="left:262px;top:500px;width:858px;height:2px;background:#efefef"></div>
<div class="cb" style="left:274px;top:506.5px"></div>
<div class="abs" style="left:306px;top:504.5px;width:20px;height:20px"><svg width="20" height="20" viewBox="306 158 20 20"><circle cx="313.9" cy="164" r="2.8" fill="none" stroke="#a4a4a4" stroke-width="2.1"/><path d="M316 166.5 L316 174.3" stroke="#adadad" stroke-width="1.7"/><circle cx="317.5" cy="163.7" r="2.5" fill="#f6d685" stroke="#efb24c" stroke-width="2.2"/><path d="M318.9 166.2 L322.6 172.3" stroke="#efb24c" stroke-width="2.1"/></svg></div>
<div class="abs" style="left:326.8px;top:518.8px;width:1.9px;height:1.9px;background:#555;border-radius:50%"></div>
<div class="abs" style="left:329.8px;top:518.8px;width:1.9px;height:1.9px;background:#555;border-radius:50%"></div>
<div class="c" style="left:340.6px;top:510.5px;color:#333;font-size:11.5px">N...</div>
<div class="c lato" style="left:372px;top:510.3px;">27.1.1.17</div>
<div class="c" style="left:473.5px;top:511.2px">Enrutador Cisco</div>
<div class="c lato" style="left:596.7px;top:510.3px">2500</div>
<div class="c lato" style="left:709.5px;top:510.3px">2612</div>
<div class="abs" style="left:822.4px;top:508.7px;width:15px;height:15px"><svg width="15" height="15" viewBox="0 0 15 15"><circle cx="7.5" cy="7.5" r="7.5" fill="#62c48f"/><path d="M4.2 7.6 L6.5 9.8 L10.9 5.3" stroke="#fff" stroke-width="1.9" fill="none" stroke-linecap="round" stroke-linejoin="round"/></svg></div>
<div class="c" style="left:846.5px;top:509.5px">Cumplimiento...</div>
<div class="abs" style="left:934.8px;top:508.5px;width:15px;height:15px"><svg width="15" height="15" viewBox="0 0 15 15"><circle cx="7.5" cy="7.5" r="7.5" fill="#f57272"/><path d="M5 5 L10 10 M10 5 L5 10" stroke="#fff" stroke-width="1.8" fill="none" stroke-linecap="round"/></svg></div>
<div class="c" style="left:959.8px;top:503.8px;line-height:12.75px">Detección de<br>conflictos...</div>
<div class="abs" style="left:1046.5px;top:508.7px;width:15px;height:15px"><svg width="15" height="15" viewBox="0 0 15 15"><circle cx="7.5" cy="7.5" r="7.5" fill="#f57272"/><path d="M5 5 L10 10 M10 5 L5 10" stroke="#fff" stroke-width="1.8" fill="none" stroke-linecap="round"/></svg></div>
<div class="c" style="left:1071.5px;top:509.5px">Violación</div>
<div class="abs" style="left:262px;top:531px;width:858px;height:2px;background:#efefef"></div>
<div class="cb" style="left:274px;top:538.0px"></div>
<div class="abs" style="left:306px;top:536.0px;width:20px;height:20px"><svg width="20" height="20" viewBox="306 158 20 20"><circle cx="313.9" cy="164" r="2.8" fill="none" stroke="#a4a4a4" stroke-width="2.1"/><path d="M316 166.5 L316 174.3" stroke="#adadad" stroke-width="1.7"/><circle cx="317.5" cy="163.7" r="2.5" fill="#f6d685" stroke="#efb24c" stroke-width="2.2"/><path d="M318.9 166.2 L322.6 172.3" stroke="#efb24c" stroke-width="2.1"/></svg></div>
<div class="abs" style="left:326.8px;top:550.3px;width:1.9px;height:1.9px;background:#555;border-radius:50%"></div>
<div class="abs" style="left:329.8px;top:550.3px;width:1.9px;height:1.9px;background:#555;border-radius:50%"></div>
<div class="c" style="left:340.6px;top:542.0px;color:#333;font-size:11.5px">N...</div>
<div class="c lato" style="left:372px;top:541.8px;">27.1.1.18</div>
<div class="c" style="left:473.5px;top:542.7px">Enrutador Cisco</div>
<div class="c lato" style="left:596.7px;top:541.8px">2500</div>
<div class="c lato" style="left:709.5px;top:541.8px">2612</div>
<div class="abs" style="left:822.4px;top:540.2px;width:15px;height:15px"><svg width="15" height="15" viewBox="0 0 15 15"><circle cx="7.5" cy="7.5" r="7.5" fill="#62c48f"/><path d="M4.2 7.6 L6.5 9.8 L10.9 5.3" stroke="#fff" stroke-width="1.9" fill="none" stroke-linecap="round" stroke-linejoin="round"/></svg></div>
<div class="c" style="left:846.5px;top:541.0px">Cumplimiento...</div>
<div class="abs" style="left:934.8px;top:540.0px;width:15px;height:15px"><svg width="15" height="15" viewBox="0 0 15 15"><circle cx="7.5" cy="7.5" r="7.5" fill="#f57272"/><path d="M5 5 L10 10 M10 5 L5 10" stroke="#fff" stroke-width="1.8" fill="none" stroke-linecap="round"/></svg></div>
<div class="c" style="left:959.8px;top:535.2px;line-height:12.75px">Detección de<br>conflictos...</div>
<div class="abs" style="left:1046.5px;top:540.2px;width:15px;height:15px"><svg width="15" height="15" viewBox="0 0 15 15"><circle cx="7.5" cy="7.5" r="7.5" fill="#f57272"/><path d="M5 5 L10 10 M10 5 L5 10" stroke="#fff" stroke-width="1.8" fill="none" stroke-linecap="round"/></svg></div>
<div class="c" style="left:1071.5px;top:541.0px">Violación</div>
<div class="abs" style="left:262px;top:562px;width:858px;height:2px;background:#efefef"></div>
<div class="cb" style="left:274px;top:569.5px"></div>
<div class="abs" style="left:306px;top:567.5px;width:20px;height:20px"><svg width="20" height="20" viewBox="306 158 20 20"><circle cx="313.9" cy="164" r="2.8" fill="none" stroke="#a4a4a4" stroke-width="2.1"/><path d="M316 166.5 L316 174.3" stroke="#adadad" stroke-width="1.7"/><circle cx="317.5" cy="163.7" r="2.5" fill="#f6d685" stroke="#efb24c" stroke-width="2.2"/><path d="M318.9 166.2 L322.6 172.3" stroke="#efb24c" stroke-width="2.1"/></svg></div>
<div class="abs" style="left:326.8px;top:581.8px;width:1.9px;height:1.9px;background:#555;border-radius:50%"></div>
<div class="abs" style="left:329.8px;top:581.8px;width:1.9px;height:1.9px;background:#555;border-radius:50%"></div>
<div class="c" style="left:340.6px;top:573.5px;color:#333;font-size:11.5px">N...</div>
<div class="c lato" style="left:372px;top:573.3px;">27.1.1.19</div>
<div class="c" style="left:473.5px;top:574.2px">Enrutador Cisco</div>
<div class="c lato" style="left:596.7px;top:573.3px">2500</div>
<div class="c lato" style="left:709.5px;top:573.3px">2612</div>
<div class="abs" style="left:822.4px;top:571.7px;width:15px;height:15px"><svg width="15" height="15" viewBox="0 0 15 15"><circle cx="7.5" cy="7.5" r="7.5" fill="#62c48f"/><path d="M4.2 7.6 L6.5 9.8 L10.9 5.3" stroke="#fff" stroke-width="1.9" fill="none" stroke-linecap="round" stroke-linejoin="round"/></svg></div>
<div class="c" style="left:846.5px;top:572.5px">Cumplimiento...</div>
<div class="abs" style="left:934.8px;top:571.5px;width:15px;height:15px"><svg width="15" height="15" viewBox="0 0 15 15"><circle cx="7.5" cy="7.5" r="7.5" fill="#f57272"/><path d="M5 5 L10 10 M10 5 L5 10" stroke="#fff" stroke-width="1.8" fill="none" stroke-linecap="round"/></svg></div>
<div class="c" style="left:959.8px;top:566.8px;line-height:12.75px">Detección de<br>conflictos...</div>
<div class="abs" style="left:1046.5px;top:571.7px;width:15px;height:15px"><svg width="15" height="15" viewBox="0 0 15 15"><circle cx="7.5" cy="7.5" r="7.5" fill="#f57272"/><path d="M5 5 L10 10 M10 5 L5 10" stroke="#fff" stroke-width="1.8" fill="none" stroke-linecap="round"/></svg></div>
<div class="c" style="left:1071.5px;top:572.5px">Violación</div>
<div class="abs" style="left:262px;top:594px;width:858px;height:2px;background:#efefef"></div>
<div class="cb" style="left:274px;top:601.0px"></div>
<div class="abs" style="left:306px;top:599.0px;width:20px;height:20px"><svg width="20" height="20" viewBox="306 158 20 20"><circle cx="313.9" cy="164" r="2.8" fill="none" stroke="#a4a4a4" stroke-width="2.1"/><path d="M316 166.5 L316 174.3" stroke="#adadad" stroke-width="1.7"/><circle cx="317.5" cy="163.7" r="2.5" fill="#f6d685" stroke="#efb24c" stroke-width="2.2"/><path d="M318.9 166.2 L322.6 172.3" stroke="#efb24c" stroke-width="2.1"/></svg></div>
<div class="abs" style="left:326.8px;top:613.3px;width:1.9px;height:1.9px;background:#555;border-radius:50%"></div>
<div class="abs" style="left:329.8px;top:613.3px;width:1.9px;height:1.9px;background:#555;border-radius:50%"></div>
<div class="c" style="left:340.6px;top:605.0px;color:#333;font-size:11.5px">N...</div>
<div class="c lato" style="left:372px;top:604.8px;">27.1.1.2</div>
<div class="c" style="left:473.5px;top:605.7px">Enrutador Cisco</div>
<div class="c lato" style="left:596.7px;top:604.8px">2500</div>
<div class="c lato" style="left:709.5px;top:604.8px">2612</div>
<div class="abs" style="left:822.4px;top:603.2px;width:15px;height:15px"><svg width="15" height="15" viewBox="0 0 15 15"><circle cx="7.5" cy="7.5" r="7.5" fill="#62c48f"/><path d="M4.2 7.6 L6.5 9.8 L10.9 5.3" stroke="#fff" stroke-width="1.9" fill="none" stroke-linecap="round" stroke-linejoin="round"/></svg></div>
<div class="c" style="left:846.5px;top:604.0px">Cumplimiento...</div>
<div class="abs" style="left:934.8px;top:603.0px;width:15px;height:15px"><svg width="15" height="15" viewBox="0 0 15 15"><circle cx="7.5" cy="7.5" r="7.5" fill="#f57272"/><path d="M5 5 L10 10 M10 5 L5 10" stroke="#fff" stroke-width="1.8" fill="none" stroke-linecap="round"/></svg></div>
<div class="c" style="left:959.8px;top:598.2px;line-height:12.75px">Detección de<br>conflictos...</div>
<div class="abs" style="left:1046.5px;top:603.2px;width:15px;height:15px"><svg width="15" height="15" viewBox="0 0 15 15"><circle cx="7.5" cy="7.5" r="7.5" fill="#f57272"/><path d="M5 5 L10 10 M10 5 L5 10" stroke="#fff" stroke-width="1.8" fill="none" stroke-linecap="round"/></svg></div>
<div class="c" style="left:1071.5px;top:604.0px">Violación</div>
<div class="abs" style="left:262px;top:626px;width:858px;height:2px;background:#efefef"></div>
<div class="cb" style="left:274px;top:632.5px"></div>
<div class="abs" style="left:306px;top:630.5px;width:20px;height:20px"><svg width="20" height="20" viewBox="306 158 20 20"><circle cx="313.9" cy="164" r="2.8" fill="none" stroke="#a4a4a4" stroke-width="2.1"/><path d="M316 166.5 L316 174.3" stroke="#adadad" stroke-width="1.7"/><circle cx="317.5" cy="163.7" r="2.5" fill="#f6d685" stroke="#efb24c" stroke-width="2.2"/><path d="M318.9 166.2 L322.6 172.3" stroke="#efb24c" stroke-width="2.1"/></svg></div>
<div class="abs" style="left:326.8px;top:644.8px;width:1.9px;height:1.9px;background:#555;border-radius:50%"></div>
<div class="abs" style="left:329.8px;top:644.8px;width:1.9px;height:1.9px;background:#555;border-radius:50%"></div>
<div class="c" style="left:340.6px;top:636.5px;color:#333;font-size:11.5px">N...</div>
<div class="c lato" style="left:372px;top:636.3px;">27.1.1.20</div>
<div class="c" style="left:473.5px;top:637.2px">Enrutador Cisco</div>
<div class="c lato" style="left:596.7px;top:636.3px">2500</div>
<div class="c lato" style="left:709.5px;top:636.3px">2612</div>
<div class="abs" style="left:822.4px;top:634.7px;width:15px;height:15px"><svg width="15" height="15" viewBox="0 0 15 15"><circle cx="7.5" cy="7.5" r="7.5" fill="#62c48f"/><path d="M4.2 7.6 L6.5 9.8 L10.9 5.3" stroke="#fff" stroke-width="1.9" fill="none" stroke-linecap="round" stroke-linejoin="round"/></svg></div>
<div class="c" style="left:846.5px;top:635.5px">Cumplimiento...</div>
<div class="abs" style="left:934.8px;top:634.5px;width:15px;height:15px"><svg width="15" height="15" viewBox="0 0 15 15"><circle cx="7.5" cy="7.5" r="7.5" fill="#f57272"/><path d="M5 5 L10 10 M10 5 L5 10" stroke="#fff" stroke-width="1.8" fill="none" stroke-linecap="round"/></svg></div>
<div class="c" style="left:959.8px;top:629.8px;line-height:12.75px">Detección de<br>conflictos...</div>
<div class="abs" style="left:1046.5px;top:634.7px;width:15px;height:15px"><svg width="15" height="15" viewBox="0 0 15 15"><circle cx="7.5" cy="7.5" r="7.5" fill="#f57272"/><path d="M5 5 L10 10 M10 5 L5 10" stroke="#fff" stroke-width="1.8" fill="none" stroke-linecap="round"/></svg></div>
<div class="c" style="left:1071.5px;top:635.5px">Violación</div>
<div class="abs" style="left:262px;top:657px;width:858px;height:2px;background:#efefef"></div>
<div class="cb" style="left:274px;top:664.0px"></div>
<div class="abs" style="left:306px;top:662.0px;width:20px;height:20px"><svg width="20" height="20" viewBox="306 158 20 20"><circle cx="313.9" cy="164" r="2.8" fill="none" stroke="#a4a4a4" stroke-width="2.1"/><path d="M316 166.5 L316 174.3" stroke="#adadad" stroke-width="1.7"/><circle cx="317.5" cy="163.7" r="2.5" fill="#f6d685" stroke="#efb24c" stroke-width="2.2"/><path d="M318.9 166.2 L322.6 172.3" stroke="#efb24c" stroke-width="2.1"/></svg></div>
<div class="abs" style="left:326.8px;top:676.3px;width:1.9px;height:1.9px;background:#555;border-radius:50%"></div>
<div class="abs" style="left:329.8px;top:676.3px;width:1.9px;height:1.9px;background:#555;border-radius:50%"></div>
<div class="c" style="left:340.6px;top:668.0px;color:#333;font-size:11.5px">N...</div>
<div class="c lato" style="left:372px;top:667.8px;">27.1.1.21</div>
<div class="c" style="left:473.5px;top:668.7px">Enrutador Cisco</div>
<div class="c lato" style="left:596.7px;top:667.8px">2500</div>
<div class="c lato" style="left:709.5px;top:667.8px">2612</div>
<div class="abs" style="left:822.4px;top:666.2px;width:15px;height:15px"><svg width="15" height="15" viewBox="0 0 15 15"><circle cx="7.5" cy="7.5" r="7.5" fill="#62c48f"/><path d="M4.2 7.6 L6.5 9.8 L10.9 5.3" stroke="#fff" stroke-width="1.9" fill="none" stroke-linecap="round" stroke-linejoin="round"/></svg></div>
<div class="c" style="left:846.5px;top:667.0px">Cumplimiento...</div>
<div class="abs" style="left:934.8px;top:666.0px;width:15px;height:15px"><svg width="15" height="15" viewBox="0 0 15 15"><circle cx="7.5" cy="7.5" r="7.5" fill="#f57272"/><path d="M5 5 L10 10 M10 5 L5 10" stroke="#fff" stroke-width="1.8" fill="none" stroke-linecap="round"/></svg></div>
<div class="c" style="left:959.8px;top:661.2px;line-height:12.75px">Detección de<br>conflictos...</div>
<div class="abs" style="left:1046.5px;top:666.2px;width:15px;height:15px"><svg width="15" height="15" viewBox="0 0 15 15"><circle cx="7.5" cy="7.5" r="7.5" fill="#f57272"/><path d="M5 5 L10 10 M10 5 L5 10" stroke="#fff" stroke-width="1.8" fill="none" stroke-linecap="round"/></svg></div>
<div class="c" style="left:1071.5px;top:667.0px">Violación</div>
<div class="abs" style="left:262px;top:688px;width:858px;height:2px;background:#efefef"></div>
<div class="cb" style="left:274px;top:695.5px"></div>
<div class="abs" style="left:306px;top:693.5px;width:20px;height:20px"><svg width="20" height="20" viewBox="306 158 20 20"><circle cx="313.9" cy="164" r="2.8" fill="none" stroke="#a4a4a4" stroke-width="2.1"/><path d="M316 166.5 L316 174.3" stroke="#adadad" stroke-width="1.7"/><circle cx="317.5" cy="163.7" r="2.5" fill="#f6d685" stroke="#efb24c" stroke-width="2.2"/><path d="M318.9 166.2 L322.6 172.3" stroke="#efb24c" stroke-width="2.1"/></svg></div>
<div class="abs" style="left:326.8px;top:707.8px;width:1.9px;height:1.9px;background:#555;border-radius:50%"></div>
<div class="abs" style="left:329.8px;top:707.8px;width:1.9px;height:1.9px;background:#555;border-radius:50%"></div>
<div class="c" style="left:340.6px;top:699.5px;color:#333;font-size:11.5px">N...</div>
<div class="c lato" style="left:372px;top:699.3px;">27.1.1.22</div>
<div class="c" style="left:473.5px;top:700.2px">Enrutador Cisco</div>
<div class="c lato" style="left:596.7px;top:699.3px">2500</div>
<div class="c lato" style="left:709.5px;top:699.3px">2612</div>
<div class="abs" style="left:822.4px;top:697.7px;width:15px;height:15px"><svg width="15" height="15" viewBox="0 0 15 15"><circle cx="7.5" cy="7.5" r="7.5" fill="#62c48f"/><path d="M4.2 7.6 L6.5 9.8 L10.9 5.3" stroke="#fff" stroke-width="1.9" fill="none" stroke-linecap="round" stroke-linejoin="round"/></svg></div>
<div class="c" style="left:846.5px;top:698.5px">Cumplimiento...</div>
<div class="abs" style="left:934.8px;top:697.5px;width:15px;height:15px"><svg width="15" height="15" viewBox="0 0 15 15"><circle cx="7.5" cy="7.5" r="7.5" fill="#f57272"/><path d="M5 5 L10 10 M10 5 L5 10" stroke="#fff" stroke-width="1.8" fill="none" stroke-linecap="round"/></svg></div>
<div class="c" style="left:959.8px;top:692.8px;line-height:12.75px">Detección de<br>conflictos...</div>
<div class="abs" style="left:1046.5px;top:697.7px;width:15px;height:15px"><svg width="15" height="15" viewBox="0 0 15 15"><circle cx="7.5" cy="7.5" r="7.5" fill="#f57272"/><path d="M5 5 L10 10 M10 5 L5 10" stroke="#fff" stroke-width="1.8" fill="none" stroke-linecap="round"/></svg></div>
<div class="c" style="left:1071.5px;top:698.5px">Violación</div>
<div class="abs" style="left:262px;top:720px;width:858px;height:2px;background:#efefef"></div>
<div class="cb" style="left:274px;top:727.0px"></div>
<div class="abs" style="left:306px;top:725.0px;width:20px;height:20px"><svg width="20" height="20" viewBox="306 158 20 20"><circle cx="313.9" cy="164" r="2.8" fill="none" stroke="#a4a4a4" stroke-width="2.1"/><path d="M316 166.5 L316 174.3" stroke="#adadad" stroke-width="1.7"/><circle cx="317.5" cy="163.7" r="2.5" fill="#f6d685" stroke="#efb24c" stroke-width="2.2"/><path d="M318.9 166.2 L322.6 172.3" stroke="#efb24c" stroke-width="2.1"/></svg></div>
<div class="abs" style="left:326.8px;top:739.3px;width:1.9px;height:1.9px;background:#555;border-radius:50%"></div>
<div class="abs" style="left:329.8px;top:739.3px;width:1.9px;height:1.9px;background:#555;border-radius:50%"></div>
<div class="c" style="left:340.6px;top:731.0px;color:#333;font-size:11.5px">N...</div>
<div class="c lato" style="left:372px;top:730.8px;">27.1.1.23</div>
<div class="c" style="left:473.5px;top:731.7px">Enrutador Cisco</div>
<div class="c lato" style="left:596.7px;top:730.8px">2500</div>
<div class="c lato" style="left:709.5px;top:730.8px">2612</div>
<div class="abs" style="left:822.4px;top:729.2px;width:15px;height:15px"><svg width="15" height="15" viewBox="0 0 15 15"><circle cx="7.5" cy="7.5" r="7.5" fill="#62c48f"/><path d="M4.2 7.6 L6.5 9.8 L10.9 5.3" stroke="#fff" stroke-width="1.9" fill="none" stroke-linecap="round" stroke-linejoin="round"/></svg></div>
<div class="c" style="left:846.5px;top:730.0px">Cumplimiento...</div>
<div class="abs" style="left:934.8px;top:729.0px;width:15px;height:15px"><svg width="15" height="15" viewBox="0 0 15 15"><circle cx="7.5" cy="7.5" r="7.5" fill="#f57272"/><path d="M5 5 L10 10 M10 5 L5 10" stroke="#fff" stroke-width="1.8" fill="none" stroke-linecap="round"/></svg></div>
<div class="c" style="left:959.8px;top:724.2px;line-height:12.75px">Detección de<br>conflictos...</div>
<div class="abs" style="left:1046.5px;top:729.2px;width:15px;height:15px"><svg width="15" height="15" viewBox="0 0 15 15"><circle cx="7.5" cy="7.5" r="7.5" fill="#f57272"/><path d="M5 5 L10 10 M10 5 L5 10" stroke="#fff" stroke-width="1.8" fill="none" stroke-linecap="round"/></svg></div>
<div class="c" style="left:1071.5px;top:730.0px">Violación</div>
<div class="abs" style="left:262px;top:752px;width:858px;height:2px;background:#efefef"></div>
<div class="abs" style="left:262px;top:759px;width:858px;height:21px;background:#f5f5f5;border-top:1px solid #e6e6e6"></div>
<svg class="abs" style="left:262px;top:759px" width="858" height="21" viewBox="262 759 858 21">
<circle cx="271" cy="769" r="4.8" fill="none" stroke="#666" stroke-width="1.3"/>
<path d="M274.5 772.5 L278 776" stroke="#666" stroke-width="1.5"/>
<path d="M289 770 A3.5 3.5 0 0 1 295 767 M295 769 A3.5 3.5 0 0 1 289 772" fill="none" stroke="#d8d8d8" stroke-width="1"/>
<rect x="307.5" y="766" width="8" height="7" rx="1.5" fill="#dedede"/>
<rect x="676.6" y="765.6" width="1.7" height="9.2" fill="#c8c8c8"/><path d="M685.2 765.6 L678.2 770.2 L685.2 774.8 Z" fill="#c8c8c8"/>
<path d="M696.8 765 L689.5 770 L696.8 775 Z M702.9 765 L695.6 770 L702.9 775 Z" fill="#cdcdcd"/>
<path d="M707.5 763 L707.5 778 M777.5 763 L777.5 778" stroke="#e2e2e2" stroke-width="1"/>
<rect x="736.5" y="765.5" width="17" height="10" rx="2" fill="#fff" stroke="#888" stroke-width="1"/>
<path d="M780.7 765.4 L788 770.25 L780.7 775.1 Z M786.5 765.4 L793.8 770.25 L786.5 775.1 Z" fill="#6a6a6a"/>
<path d="M798.1 765.7 L805.1 770.4 L798.1 775.1 Z" fill="#6a6a6a"/><rect x="805.1" y="765.7" width="1.9" height="9.4" fill="#6a6a6a"/>
<rect x="810.1" y="763" width="35.5" height="14.2" rx="3" fill="#fff" stroke="#a8a8a8" stroke-width="1.2"/>
<path d="M835 768.3 L838.3 771.6 L841.6 768.3" fill="none" stroke="#222" stroke-width="1.8"/>
</svg>
<div class="t" style="left:711px;top:765.5px;font-size:10px;color:#777">Page</div>
<div class="t" style="left:741px;top:766px;font-size:9px;color:#222">1</div>
<div class="t" style="left:756px;top:765.5px;font-size:10px;color:#777">of 2</div>
<div class="t" style="left:814.2px;top:766px;font-size:8.5px;color:#555">50</div>
</body></html>
